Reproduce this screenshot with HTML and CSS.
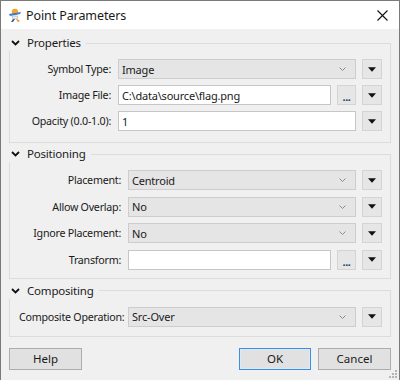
FILE: index.html
```html
<!DOCTYPE html>
<html>
<head>
<meta charset="utf-8">
<link rel="stylesheet" href="styles.css">
</head>
<body>
<div class="window">
  <div class="titlebar">
    <svg class="app-icon" width="16" height="16" viewBox="0 0 16 16">
      <circle cx="8" cy="5" r="3.2" fill="#f5a623"/>
      <path d="M2 7 L14 5 L13 7 L3 9 Z" fill="#3a7bd5"/>
      <path d="M5 9 L11 9 L10 12 L6 12 Z" fill="#e8e8e8" stroke="#9aa" stroke-width="0.5"/>
      <path d="M6 12 L4 15 L6 15 L8 12 Z" fill="#2c5aa0"/>
      <path d="M9 12 L11 15 L13 14 L10 12 Z" fill="#f08a24"/>
    </svg>
    <span class="title">Point Parameters</span>
    <svg class="close" width="11" height="11" viewBox="0 0 11 11">
      <path d="M0.5 0.5 L10.5 10.5 M10.5 0.5 L0.5 10.5" stroke="#111" stroke-width="1.1" fill="none"/>
    </svg>
  </div>

  <div class="content">
    <fieldset class="group g1">
      <legend><svg class="chev" width="9" height="6" viewBox="0 0 9 6"><path d="M1 1 L4.5 4.5 L8 1" stroke="#111" stroke-width="1.8" fill="none"/></svg>Properties</legend>
      <div class="rows">
        <div class="row">
          <label class="lbl">Symbol Type:</label>
          <div class="combo"><span>Image</span><svg class="cv" width="7" height="4" viewBox="0 0 7 4"><path d="M0.5 0.5 L3.5 3.5 L6.5 0.5" stroke="#8a8a8a" fill="none"/></svg></div>
          <div class="dd"><svg width="9" height="5" viewBox="0 0 9 5"><path d="M0 0 H9 L4.5 5 Z" fill="#111"/></svg></div>
        </div>
        <div class="row">
          <label class="lbl">Image File:</label>
          <div class="input">C:\data\source\flag.png</div>
          <div class="dots">...</div>
          <div class="dd"><svg width="9" height="5" viewBox="0 0 9 5"><path d="M0 0 H9 L4.5 5 Z" fill="#111"/></svg></div>
        </div>
        <div class="row">
          <label class="lbl">Opacity (0.0-1.0):</label>
          <div class="input">1</div>
          <div class="dd"><svg width="9" height="5" viewBox="0 0 9 5"><path d="M0 0 H9 L4.5 5 Z" fill="#111"/></svg></div>
        </div>
      </div>
    </fieldset>

    <fieldset class="group g2">
      <legend><svg class="chev" width="9" height="6" viewBox="0 0 9 6"><path d="M1 1 L4.5 4.5 L8 1" stroke="#111" stroke-width="1.8" fill="none"/></svg>Positioning</legend>
      <div class="rows wide">
        <div class="row">
          <label class="lbl">Placement:</label>
          <div class="combo"><span>Centroid</span><svg class="cv" width="7" height="4" viewBox="0 0 7 4"><path d="M0.5 0.5 L3.5 3.5 L6.5 0.5" stroke="#8a8a8a" fill="none"/></svg></div>
          <div class="dd"><svg width="9" height="5" viewBox="0 0 9 5"><path d="M0 0 H9 L4.5 5 Z" fill="#111"/></svg></div>
        </div>
        <div class="row">
          <label class="lbl">Allow Overlap:</label>
          <div class="combo"><span>No</span><svg class="cv" width="7" height="4" viewBox="0 0 7 4"><path d="M0.5 0.5 L3.5 3.5 L6.5 0.5" stroke="#8a8a8a" fill="none"/></svg></div>
          <div class="dd"><svg width="9" height="5" viewBox="0 0 9 5"><path d="M0 0 H9 L4.5 5 Z" fill="#111"/></svg></div>
        </div>
        <div class="row">
          <label class="lbl">Ignore Placement:</label>
          <div class="combo"><span>No</span><svg class="cv" width="7" height="4" viewBox="0 0 7 4"><path d="M0.5 0.5 L3.5 3.5 L6.5 0.5" stroke="#8a8a8a" fill="none"/></svg></div>
          <div class="dd"><svg width="9" height="5" viewBox="0 0 9 5"><path d="M0 0 H9 L4.5 5 Z" fill="#111"/></svg></div>
        </div>
        <div class="row">
          <label class="lbl">Transform:</label>
          <div class="input"></div>
          <div class="dots">...</div>
          <div class="dd"><svg width="9" height="5" viewBox="0 0 9 5"><path d="M0 0 H9 L4.5 5 Z" fill="#111"/></svg></div>
        </div>
      </div>
    </fieldset>

    <fieldset class="group g3">
      <legend><svg class="chev" width="9" height="6" viewBox="0 0 9 6"><path d="M1 1 L4.5 4.5 L8 1" stroke="#111" stroke-width="1.8" fill="none"/></svg>Compositing</legend>
      <div class="rows wide">
        <div class="row">
          <label class="lbl">Composite Operation:</label>
          <div class="combo"><span>Src-Over</span><svg class="cv" width="7" height="4" viewBox="0 0 7 4"><path d="M0.5 0.5 L3.5 3.5 L6.5 0.5" stroke="#8a8a8a" fill="none"/></svg></div>
          <div class="dd"><svg width="9" height="5" viewBox="0 0 9 5"><path d="M0 0 H9 L4.5 5 Z" fill="#111"/></svg></div>
        </div>
      </div>
    </fieldset>

    <div class="footer">
      <button class="btn">Help</button>
      <span class="spacer"></span>
      <button class="btn ok">OK</button>
      <button class="btn">Cancel</button>
    </div>
  </div>
  <svg class="grip" width="8" height="8" viewBox="0 0 8 8">
    <rect x="6" y="0" width="2" height="2" fill="#b5b5b5"/>
    <rect x="3" y="3" width="2" height="2" fill="#b5b5b5"/>
    <rect x="6" y="3" width="2" height="2" fill="#b5b5b5"/>
    <rect x="0" y="6" width="2" height="2" fill="#b5b5b5"/>
    <rect x="3" y="6" width="2" height="2" fill="#b5b5b5"/>
    <rect x="6" y="6" width="2" height="2" fill="#b5b5b5"/>
  </svg>
</div>
</body>
</html>
```

FILE: styles.css
```css
* { box-sizing: border-box; }
html, body { margin: 0; padding: 0; }
body {
  font-family: "Noto Sans", "Open Sans", sans-serif;
  font-size: 11px;
  color: #1a1a1a;
  background: #f0f0f0;
  letter-spacing: -0.2px;
}
.window {
  position: relative;
  width: 400px;
  height: 380px;
  border: 1px solid #7a7a7a;
  border-bottom: none;
  background: #f0f0f0;
  overflow: hidden;
}
.titlebar {
  height: 28px;
  background: #fff;
  display: flex;
  align-items: center;
  padding-left: 6px;
}
.app-icon { flex: none; }
.title {
  margin-left: 3px;
  font-size: 12.5px;
  letter-spacing: -0.1px;
  color: #1a1a1a;
  flex: 1;
}
.close { margin-right: 11px; }
.content {
  padding: 0 8px;
}
.group {
  border: 1px solid #dcdcdc;
  margin: 0;
  padding: 0;
  min-width: 0;
}
.g1 { margin-top: 6px; }
.g2 { margin-top: 3px; }
.g3 { margin-top: 4px; }
legend {
  padding: 0 5px 0 2px;
  margin-left: -1px;
  line-height: 16px;
  font-size: 11.5px;
  display: flex;
  align-items: center;
  background: #f0f0f0;
}
.chev { margin-right: 7px; }
.rows {
  display: flex;
  flex-direction: column;
  gap: 6px;
  padding: 8px 8px 11px 9px;
  --lw: 92px;
}
.g2 .rows { gap: 6.5px; padding-bottom: 8px; }
.g3 .rows { padding-bottom: 9px; }
.rows.wide { --lw: 102px; }
.row {
  display: flex;
  align-items: center;
  height: 20px;
  gap: 6px;
}
.lbl {
  width: var(--lw);
  text-align: right;
  margin-right: 1px;
  white-space: nowrap;
  flex: none;
  font-size: 10.7px;
  letter-spacing: -0.25px;
}
.combo {
  flex: 1;
  height: 20px;
  background: #e5e5e5;
  border: 1px solid #cdcdcd;
  display: flex;
  align-items: center;
  padding: 0 9px 0 3px;
  justify-content: space-between;
}
.input {
  flex: 1;
  height: 20px;
  background: #fff;
  border: 1px solid #c6c6c6;
  display: flex;
  align-items: center;
  padding: 0 3px;
}
.dd, .dots {
  flex: none;
  height: 20px;
  background: #e6e6e6;
  border: 1px solid #d4d4d4;
  display: flex;
  align-items: center;
  justify-content: center;
}
.dd { width: 20px; }
.dd svg { width: 8px; height: 5px; }
.dots {
  width: 19px;
  font-weight: bold;
  color: #1e3a66;
  font-size: 11px;
  align-items: flex-end;
  padding-bottom: 2px;
  line-height: 10px;
  letter-spacing: -0.5px;
}
.footer {
  display: flex;
  margin-top: 11px;
  gap: 7px;
}
.spacer { flex: 1; }
.btn {
  width: 73px;
  height: 22px;
  background: #e1e1e1;
  border: 1px solid #adadad;
  font-family: inherit;
  font-size: 11.5px;
  color: #1a1a1a;
  padding: 0;
}
.btn.ok {
  width: 72px;
  border: 1px solid #3c8fe0;
  box-shadow: inset 0 0 0 1px #dbe9f8;
}
.grip {
  position: absolute;
  right: 2px;
  bottom: 2px;
}
```
